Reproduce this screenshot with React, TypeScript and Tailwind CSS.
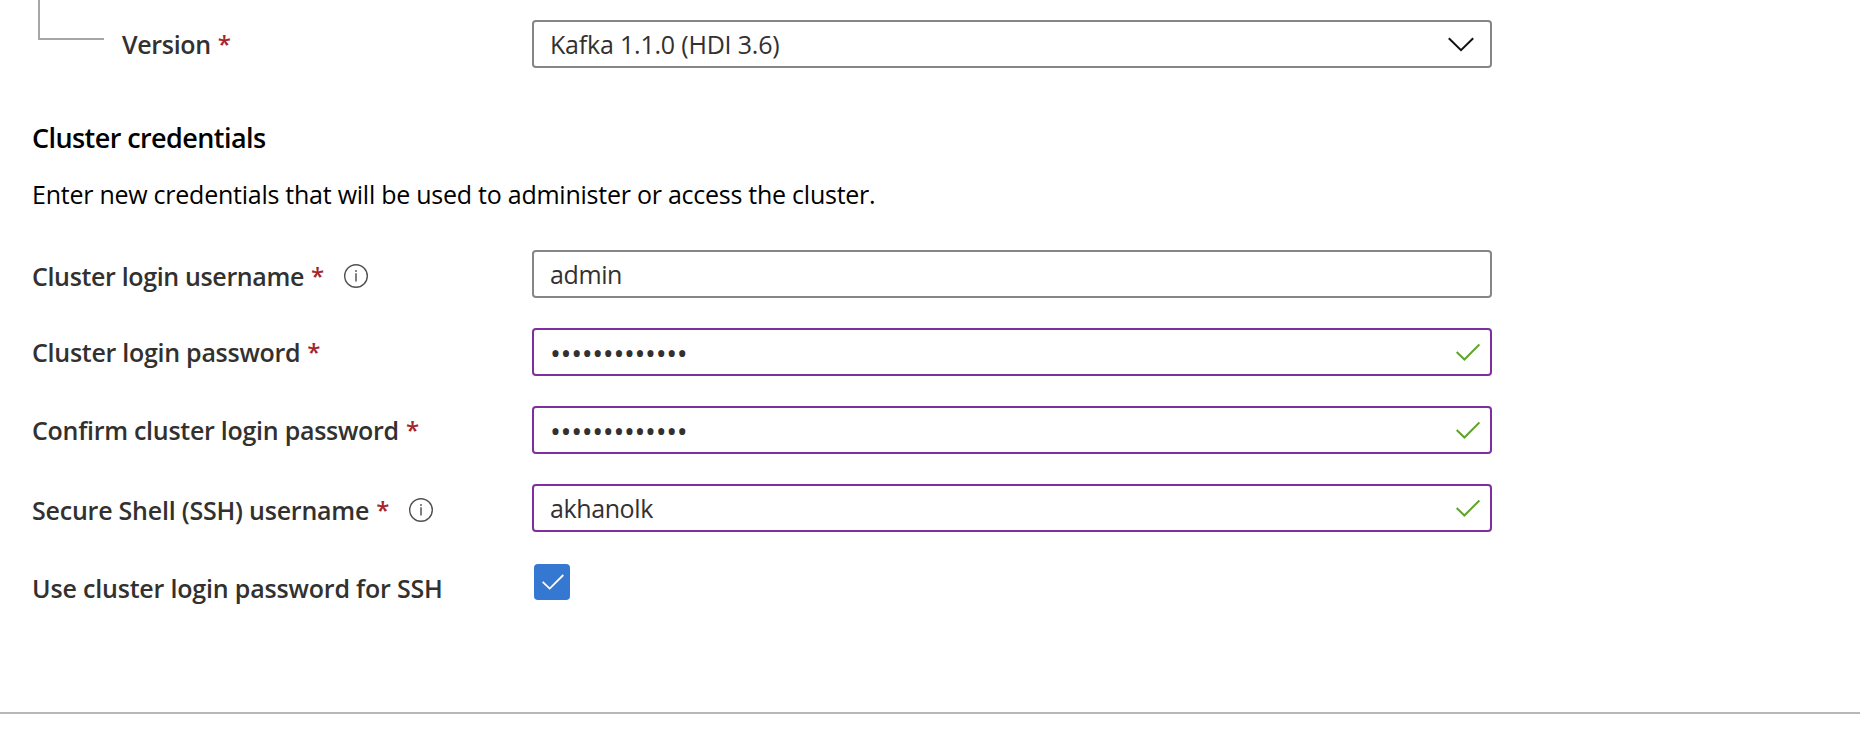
import type { ReactNode } from "react";

function Star() {
  return <span className="ml-[7px] text-[24px] leading-[48px] font-semibold text-[#a4262c]">*</span>;
}

function InfoIcon() {
  return (
    <svg className="ml-5 h-6 w-6 shrink-0" viewBox="0 0 24 24" fill="none">
      <circle cx="12" cy="12" r="11.3" stroke="#505050" strokeWidth="1.4" />
      <path d="M12 9.2V17.6" stroke="#606060" strokeWidth="1.6" />
      <circle cx="12" cy="7" r="1" fill="#606060" />
    </svg>
  );
}

function ValidIcon() {
  return (
    <svg className="h-[18px] w-6 shrink-0" viewBox="0 0 24 18" fill="none">
      <path d="M0.7 9L8.4 16.5L23.4 1.4" stroke="#5fa32a" strokeWidth="2" />
    </svg>
  );
}

function Field({ children, icon, valid }: { children: ReactNode; icon?: ReactNode; valid?: boolean }) {
  return (
    <div
      className={`flex h-12 w-[960px] items-center justify-between rounded-[4px] border-2 bg-white pl-4 leading-[44px] text-[#323130] ${
        valid ? "border-[#7f2f9d] pr-[10px]" : "border-[#868686] pr-4"
      }`}
    >
      {children}
      {icon}
    </div>
  );
}

function Row({ label, children }: { label: ReactNode; children: ReactNode }) {
  return (
    <div className="flex h-12">
      <div className="flex w-[500px] shrink-0 items-center font-semibold text-[#323130]">{label}</div>
      {children}
    </div>
  );
}

function Dots() {
  return <span className="pt-[2px] text-[29px] tracking-[-0.34px]">•••••••••••••</span>;
}

export default function App() {
  return (
    <main className="flex h-[734px] w-[1860px] flex-col overflow-hidden bg-white font-['Open_Sans',sans-serif] text-[25px] leading-[48px] whitespace-nowrap text-black">
      <div className="flex h-[68px]">
        <div className="ml-[38px] h-10 w-[66px] border-b-2 border-l-2 border-[#a6a6a6]" />
        <div className="mt-5 ml-[18px] flex w-[410px] font-semibold text-[#323130]">
          <span className="tracking-[-0.32px]">Version</span>
          <Star />
        </div>
        <div className="mt-5">
          <Field
            icon={
              <svg className="h-[15px] w-[26px]" viewBox="0 0 26 15" fill="none">
                <path d="M0.8 1.2L13 13.2L25.2 1.2" stroke="#111111" strokeWidth="2" />
              </svg>
            }
          >
            <span className="tracking-[-0.2px]">Kafka 1.1.0 (HDI 3.6)</span>
          </Field>
        </div>
      </div>

      <section className="flex flex-col pl-8">
        <h2 className="mt-[46px] h-12 text-[27px] font-semibold tracking-[-0.58px]">Cluster credentials</h2>
        <p className="mt-2 h-12 tracking-[-0.25px]">
          Enter new credentials that will be used to administer or access the cluster.
        </p>

        <div className="mt-8 flex flex-col gap-[30px]">
          <Row
            label={
              <div className="flex items-center pt-[3px]">
                <span className="tracking-[-0.35px]">Cluster login username</span>
                <Star />
                <InfoIcon />
              </div>
            }
          >
            <Field>
              <span className="tracking-[-0.4px]">admin</span>
            </Field>
          </Row>
          <Row
            label={
              <>
                <span className="tracking-[-0.27px]">Cluster login password</span>
                <Star />
              </>
            }
          >
            <Field valid icon={<ValidIcon />}>
              <Dots />
            </Field>
          </Row>
          <Row
            label={
              <>
                <span className="tracking-[-0.27px]">Confirm cluster login password</span>
                <Star />
              </>
            }
          >
            <Field valid icon={<ValidIcon />}>
              <Dots />
            </Field>
          </Row>
          <Row
            label={
              <div className="flex items-center pt-[3px]">
                <span className="tracking-[-0.22px]">Secure Shell (SSH) username</span>
                <Star />
                <InfoIcon />
              </div>
            }
          >
            <Field valid icon={<ValidIcon />}>
              <span className="tracking-[-0.4px]">akhanolk</span>
            </Field>
          </Row>
          <Row label={<span className="pt-1 tracking-[-0.18px]">Use cluster login password for SSH</span>}>
            <div className="mt-[2px] ml-[2px] flex h-9 w-9 items-center justify-center rounded-[4px] bg-[#3478d1] pl-[2px]">
              <svg className="h-4 w-[22px]" viewBox="0 0 22 16" fill="none">
                <path d="M0.6 7.8L7.7 14.6L21.3 1" stroke="white" strokeWidth="1.8" />
              </svg>
            </div>
          </Row>
        </div>
      </section>

      <div className="mt-[102px] h-0.5 bg-[#b8b8b8]" />
    </main>
  );
}
